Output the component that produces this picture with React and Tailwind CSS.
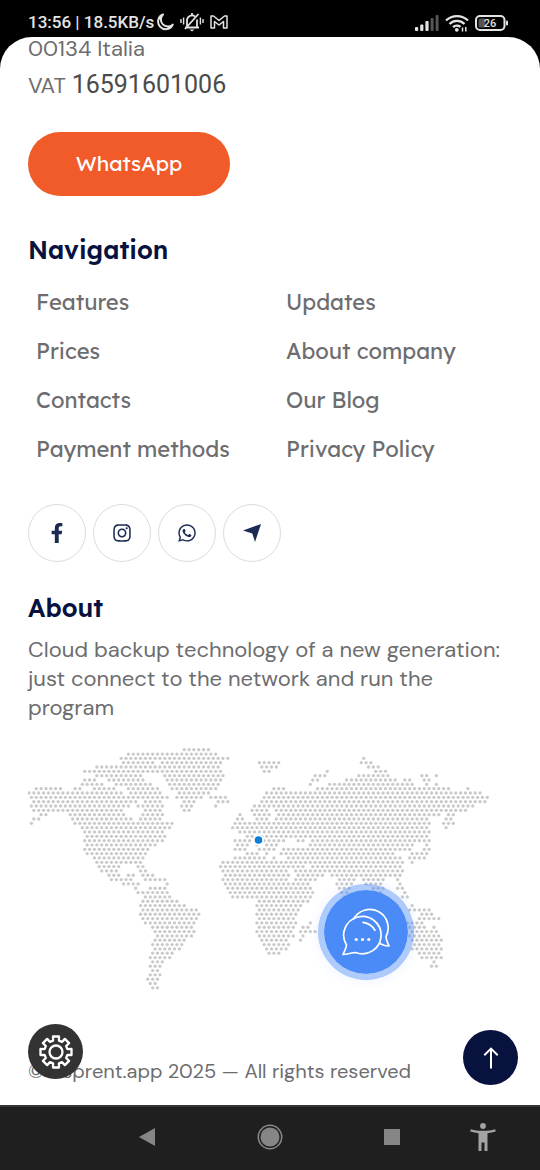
import React from "react";
import { FaFacebookF, FaInstagram, FaWhatsapp } from "react-icons/fa";

const PITCH_X = 4.85;
const PITCH_Y = 4.33;

// Each entry is one line of the dotted world map: pairs of start and end x.
const MAP_ROWS = [
  [[166, 187]],
  [[107, 194]],
  [[99, 206], [345, 345]],
  [[102, 132], [140, 199], [237, 257], [343, 353]],
  [[76, 81], [89, 125], [132, 196], [240, 255], [350, 360]],
  [[63, 74], [80, 83], [87, 122], [130, 199], [242, 247], [309, 309], [357, 367]],
  [[76, 86], [91, 120], [147, 201], [297, 307], [340, 369], [402, 407], [417, 417]],
  [[63, 74], [87, 123], [149, 199], [294, 299], [328, 377], [385, 390], [405, 410]],
  [[61, 83], [95, 100], [108, 130], [152, 197], [292, 292], [311, 382], [386, 390], [407, 407], [417, 417]],
  [[15, 41], [54, 60], [73, 93], [110, 137], [154, 194], [252, 262], [296, 300], [309, 430], [448, 448]],
  [[9, 51], [56, 103], [109, 139], [157, 187], [245, 274], [282, 462]],
  [[11, 118], [125, 146], [159, 180], [193, 203], [242, 467]],
  [[14, 117], [124, 138], [162, 172], [196, 206], [240, 465]],
  [[11, 107], [117, 117], [125, 143], [160, 170], [198, 198], [233, 454]],
  [[14, 102], [123, 140], [162, 167], [231, 246], [255, 447]],
  [[21, 26], [49, 103], [125, 143], [218, 218], [233, 247], [257, 407], [415, 419], [429, 434]],
  [[13, 18], [52, 110], [122, 141], [216, 221], [236, 245], [254, 405], [427, 432]],
  [[11, 11], [54, 151], [213, 223], [231, 410], [424, 434]],
  [[61, 148], [211, 407], [427, 427]],
  [[63, 143], [218, 410]],
  [[66, 143], [226, 407]],
  [[63, 141], [213, 223], [229, 232], [245, 262], [276, 285], [291, 402], [410, 410]],
  [[66, 133], [216, 226], [236, 236], [248, 257], [290, 393], [407, 407]],
  [[63, 127], [213, 223], [240, 252], [262, 287], [293, 392], [403, 408]],
  [[66, 124], [226, 237], [245, 245], [263, 375], [393, 408]],
  [[73, 122], [213, 242], [252, 252], [268, 382], [390, 405]],
  [[76, 120], [201, 382], [393, 393]],
  [[78, 98], [117, 122], [199, 285], [293, 382]],
  [[80, 97], [119, 124], [201, 268], [274, 298], [306, 382]],
  [[87, 97], [107, 112], [122, 132], [204, 270], [277, 300], [313, 377], [381, 381]],
  [[90, 110], [124, 144], [202, 267], [274, 296], [320, 332], [345, 363], [378, 378]],
  [[102, 117], [145, 145], [204, 290], [318, 330], [347, 363], [381, 381]],
  [[114, 114], [128, 143], [206, 288], [320, 330], [353, 365], [378, 383]],
  [[117, 145], [208, 291], [323, 328], [357, 363], [385, 385]],
  [[123, 152], [211, 288], [325, 325], [358, 362], [383, 388]],
  [[122, 155], [237, 287]],
  [[119, 162], [235, 280], [375, 380], [393, 393]],
  [[122, 174], [237, 280], [390, 410]],
  [[119, 177], [238, 278], [403, 413]],
  [[122, 174], [240, 275], [400, 410], [415, 420]],
  [[124, 172], [237, 277], [288, 288], [388, 400]],
  [[131, 170], [237, 275], [285, 290], [390, 402], [412, 412]],
  [[133, 172], [238, 273], [283, 293], [390, 405], [412, 415]],
  [[136, 170], [241, 272], [281, 285], [388, 420]],
  [[133, 162], [243, 268], [283, 283], [390, 422]],
  [[131, 160], [245, 270], [393, 420]],
  [[133, 157], [248, 264], [392, 422]],
  [[131, 150], [247, 257], [399, 420]],
  [[128, 148], [402, 422]],
  [[131, 141], [415, 415]],
  [[128, 138], [412, 417]],
  [[131, 136]],
  [[128, 138]],
  [[126, 136]],
  [[128, 133]],
  [[131, 136]],
];

function WorldMap() {
  const dots = [];
  MAP_ROWS.forEach((runs, row) => {
    const origin = row % 2 === 0 ? 9 : 11.4;
    const y = 9.7 + row * PITCH_Y;
    runs.forEach(([from, to]) => {
      const first = Math.round((from - origin) / PITCH_X);
      const last = Math.round((to - origin) / PITCH_X);
      for (let k = first; k <= last; k += 1) {
        dots.push(<circle key={`${row}-${k}`} cx={origin + k * PITCH_X} cy={y} r="1.65" />);
      }
    });
  });
  return (
    <svg viewBox="8 6 484 246" className="block w-full" role="img" aria-label="World map">
      <g fill="#cacaca">{dots}</g>
      <circle cx="238.5" cy="100" r="5.5" fill="#fff" />
      <circle cx="238.5" cy="100" r="3.8" fill="#0b7ddb" />
    </svg>
  );
}

function StatusBar() {
  return (
    <header className="flex h-[37px] items-end justify-between bg-black pr-8 pb-[5px] pl-7 text-[#e4e4e4]">
      <div className="flex items-center gap-0.5">
        <span className="font-[Roboto,sans-serif] text-[17px] leading-5 font-medium">13:56 | 18.5KB/s</span>
        <svg width="18" height="18" viewBox="0 0 18 18" fill="none" stroke="currentColor" strokeWidth="2" strokeLinejoin="round">
          <path d="M7 1.5A7.6 7.6 0 1 0 16.7 11.6 7 7 0 0 1 7 1.5Z" />
        </svg>
        <svg className="ml-1" width="24" height="20" viewBox="0 0 24 20" fill="none" stroke="currentColor" strokeWidth="1.8">
          <path d="M5 15.5h14M7 14V8.5a5 5 0 0 1 8-4M17 7.500v8M5 17 18.500 2M12 1v2.500" />
          <path d="M1 7v4M3.600 5.500v7M20.400 5.500v7M23 7v4" strokeWidth="1.400" />
          <path d="M9.500 17.500h5L12 19.500Z" fill="currentColor" stroke="none" />
        </svg>
        <svg className="ml-1" width="18" height="14" viewBox="0 0 18 14" fill="none" stroke="currentColor" strokeWidth="1.500" strokeLinejoin="round">
          <path d="M1 13V1h2.500L9 5.500 14.500 1H17v12h-3.500V6.500L9 10 4.500 6.500V13Z" />
        </svg>
      </div>
      <div className="flex items-center gap-1.5">
        <svg width="24" height="16" viewBox="0 0 24 16" fill="currentColor">
          <rect x="0" y="12" width="3.200" height="4" rx="1" />
          <rect x="5.200" y="9.500" width="3.200" height="6.500" rx="1" />
          <rect x="10.400" y="6" width="3.200" height="10" rx="1" />
          <rect x="15.600" y="3" width="3" height="13" rx="1" fill="#555" />
          <rect x="20.600" y="0" width="3" height="16" rx="1" fill="#555" />
        </svg>
        <svg width="24" height="18" viewBox="0 0 24 18" fill="none" stroke="currentColor" strokeWidth="2.300">
          <path d="M1 6.500a16 16 0 0 1 22 0M4.500 10a10.500 10.500 0 0 1 15 0M8 13.200a5.800 5.800 0 0 1 7.500-.3" />
          <circle cx="11.800" cy="15.800" r="1.900" fill="currentColor" stroke="none" />
          <path d="M17.500 17.500v-4M20.800 13v4.500" strokeWidth="1.500" />
        </svg>
        <svg width="33" height="16" viewBox="0 0 33 16">
          <rect x="1" y="1" width="28.500" height="14" rx="4" fill="none" stroke="currentColor" strokeWidth="2" />
          <rect x="3.500" y="3.500" width="7" height="9" rx="1.500" fill="#555" />
          <rect x="31" y="5.500" width="2" height="5" rx="1" fill="currentColor" />
          <text x="15" y="12" textAnchor="middle" fill="currentColor" className="font-[Roboto,sans-serif] text-[11px] font-medium">26</text>
        </svg>
      </div>
    </header>
  );
}

const LINKS = ["Features", "Updates", "Prices", "About company", "Contacts", "Our Blog", "Payment methods", "Privacy Policy"];

const SOCIALS = [
  { label: "Facebook", icon: <FaFacebookF size={20} /> },
  { label: "Instagram", icon: <FaInstagram size={20} /> },
  { label: "WhatsApp chat", icon: <FaWhatsapp size={20} /> },
  {
    label: "Telegram",
    icon: (
      <svg width="18" height="18" viewBox="0 0 18 18" fill="currentColor">
        <path d="M18 0 12 18 9.300 9.600 0 6.500Z" />
      </svg>
    ),
  },
];

function ChatIcon() {
  return (
    <svg width="48" height="48" viewBox="0 0 48 48" fill="none" stroke="#fff" strokeWidth="1.700" strokeLinecap="round" strokeLinejoin="round">
      <path d="M11.500 11.200A17.800 17.800 0 1 1 44 28.500C44 32 45.500 34.500 47 38 43 38.200 40.500 36.800 38 35.500" />
      <path d="M4.500 37A18.700 18.700 0 1 1 13.500 44.500C9.500 44.500 5.500 46.500 1 46.500 2.500 43 4.200 40.500 4.500 37Z" />
      <path d="M21 14.300c5 .8 9.500 3.500 12 8" />
      <g fill="#fff" stroke="none">
        <circle cx="14.200" cy="31.500" r="1.600" />
        <circle cx="20.500" cy="31.500" r="1.600" />
        <circle cx="26.800" cy="31.500" r="1.600" />
      </g>
    </svg>
  );
}

function GearIcon() {
  const teeth = [];
  for (let i = 0; i < 8; i += 1) {
    [[-0.25, 11.8], [-0.19, 15.8], [0.19, 15.8], [0.25, 11.8]].forEach(([turn, radius]) => {
      const angle = (i * Math.PI) / 4 + turn;
      teeth.push(`${(17 + radius * Math.sin(angle)).toFixed(2)},${(17 - radius * Math.cos(angle)).toFixed(2)}`);
    });
  }
  return (
    <svg width="34" height="34" viewBox="0 0 34 34" fill="none" stroke="#fff" strokeWidth="2.300" strokeLinejoin="round">
      <polygon points={teeth.join(" ")} />
      <circle cx="17" cy="17" r="6.500" />
    </svg>
  );
}

function SystemNav() {
  return (
    <nav aria-label="System" className="grid h-[65px] grid-cols-[85fr_123fr_123fr_122fr_60fr_27fr] items-center justify-items-center border-t-2 border-[#343434] bg-[#1f1f1f] pb-[3px] text-[#868686]">
      <button type="button" aria-label="Back" className="col-start-2">
        <svg width="18" height="20" viewBox="0 0 18 20" fill="currentColor"><path d="M17 1v18L1 10Z" /></svg>
      </button>
      <button type="button" aria-label="Home">
        <svg width="26" height="26" viewBox="0 0 26 26" fill="currentColor">
          <circle cx="13" cy="13" r="9.500" />
          <circle cx="13" cy="13" r="11.700" fill="none" stroke="currentColor" strokeWidth="1.600" />
        </svg>
      </button>
      <button type="button" aria-label="Recent apps">
        <svg width="16" height="16" viewBox="0 0 16 16" fill="currentColor"><path d="M0 0h16v16H0Z" /></svg>
      </button>
      <button type="button" aria-label="Accessibility" className="text-[#a3a3a3]">
        <svg width="26" height="28" viewBox="0 0 26 28" fill="currentColor">
          <circle cx="13" cy="3" r="2.900" />
          <path d="M.8 6.200C8 8.300 18 8.300 25.200 6.200l.5 2.300c-2.700.8-5.400 1.300-8.200 1.700V28h-3v-8.500h-3V28h-3V10.200C5.700 9.800 3 9.300.3 8.500Z" />
        </svg>
      </button>
    </nav>
  );
}

export default function App() {
  return (
    <div className="flex min-h-screen flex-col bg-black">
      <StatusBar />
      <main className="relative flex-1 overflow-hidden rounded-t-[32px] bg-white px-7 font-['DM_Sans',Inter,sans-serif] text-[#6d6d6f]">
        <address className="text-[22px] leading-6 not-italic">
          <p>00134 Italia</p>
          <p className="mt-3">
            VAT <span className="font-[Roboto,sans-serif] text-[25px] leading-6 text-[#4b4b4b]">16591601006</span>
          </p>
        </address>

        <a href="#whatsapp" className="mt-[34px] flex h-16 w-[202px] items-center justify-center rounded-full bg-[#f15a29] font-[Lexend,'DM_Sans',Inter,sans-serif] text-[21px] font-normal text-white">
          WhatsApp
        </a>

        <section className="mt-9 font-[Lexend,'DM_Sans',Inter,sans-serif]">
          <h2 className="text-[25px] leading-9 font-semibold text-[#07123f]">Navigation</h2>
          <ul className="mt-2.5 grid grid-cols-2 gap-x-6 pl-2 text-[22px] leading-[49px] font-normal">
            {LINKS.map((name) => (
              <li key={name}>
                <a href="#top">{name}</a>
              </li>
            ))}
          </ul>
        </section>

        <ul className="mt-[30px] flex gap-[7px]">
          {SOCIALS.map(({ label, icon }) => (
            <li key={label}>
              <a href="#social" aria-label={label} className="flex size-[58px] items-center justify-center rounded-full border border-[#dcdcdc] text-[#1c2b52]">
                {icon}
              </a>
            </li>
          ))}
        </ul>

        <section className="mt-7">
          <h2 className="font-[Lexend,'DM_Sans',Inter,sans-serif] text-[25px] leading-9 font-semibold text-[#07123f]">About</h2>
          <p className="mt-[9px] text-[22px] leading-[29px]">
            Cloud backup technology of a new generation: just connect to the network and run the program
          </p>
        </section>

        <div className="mt-6">
          <WorldMap />
        </div>

        <p className="mt-[65px] pb-[18px] text-xl leading-7">© Usprent.app 2025 — All rights reserved</p>

        <button type="button" aria-label="Open chat" className="absolute right-[126px] bottom-[125px] flex size-24 items-center justify-center rounded-full border-[6px] border-[#4b8bf7]/45 bg-[#4b8bf7] bg-clip-padding shadow-[0_0_12px_rgba(75,139,247,0.12)]">
          <ChatIcon />
        </button>
        <button type="button" aria-label="Settings" className="absolute bottom-[26px] left-7 flex size-[55px] items-center justify-center rounded-full bg-[#333]">
          <GearIcon />
        </button>
        <button type="button" aria-label="Back to top" className="absolute right-[22px] bottom-5 flex size-[55px] items-center justify-center rounded-full bg-[#07123f]">
          <svg width="16" height="22" viewBox="0 0 16 22" fill="none" stroke="#fff" strokeWidth="2">
            <path d="M8 21.500V2M1.300 8.300 8 1.600l6.700 6.700" />
          </svg>
        </button>
      </main>
      <SystemNav />
    </div>
  );
}
